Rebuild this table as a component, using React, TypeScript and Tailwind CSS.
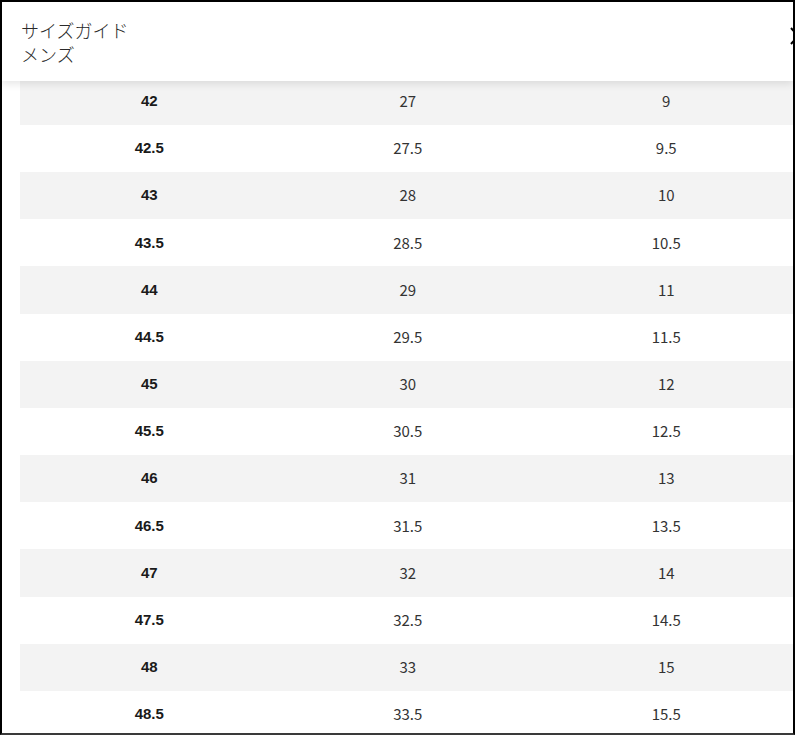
import React from "react";

const rows = [
  ["42", "27", "9"],
  ["42.5", "27.5", "9.5"],
  ["43", "28", "10"],
  ["43.5", "28.5", "10.5"],
  ["44", "29", "11"],
  ["44.5", "29.5", "11.5"],
  ["45", "30", "12"],
  ["45.5", "30.5", "12.5"],
  ["46", "31", "13"],
  ["46.5", "31.5", "13.5"],
  ["47", "32", "14"],
  ["47.5", "32.5", "14.5"],
  ["48", "33", "15"],
  ["48.5", "33.5", "15.5"],
];

export default function App() {
  return (
    <div className="w-[795px] h-[735px] overflow-hidden border-2 border-black border-b-[#3a3a3a] bg-white">
      <div className="relative z-10 bg-white pl-[19px] pt-[16px] pb-[15px] shadow-[0_3px_8px_rgba(0,0,0,0.10)] font-['Noto_Sans_CJK_JP',sans-serif] text-[18px] leading-[24px] font-light text-[#2a2a2a]">
        <div>サイズガイド</div>
        <div>メンズ</div>
        <button className="absolute left-[787px] top-[24px] text-black">
          <svg width="18" height="20" viewBox="0 0 18 20" fill="none" stroke="currentColor" strokeWidth="2">
            <path d="M2 2L16 18M16 2L2 18" />
          </svg>
        </button>
      </div>
      <div className="-mt-[3.4px] ml-[18px]">
        {rows.map((r, i) => (
          <div
            key={r[0]}
            className={`grid grid-cols-[258.5px_258.5px_258.5px] h-[47.2px] items-center text-center text-[15px] ${i % 2 === 0 ? "bg-[#f3f3f3]" : "bg-white"}`}
          >
            <div className="font-['Liberation_Sans',sans-serif] font-bold text-[#1a1a1a]">{r[0]}</div>
            <div className="font-['Noto_Sans_CJK_JP',sans-serif] text-[#333]">{r[1]}</div>
            <div className="font-['Noto_Sans_CJK_JP',sans-serif] text-[#333]">{r[2]}</div>
          </div>
        ))}
      </div>
    </div>
  );
}
